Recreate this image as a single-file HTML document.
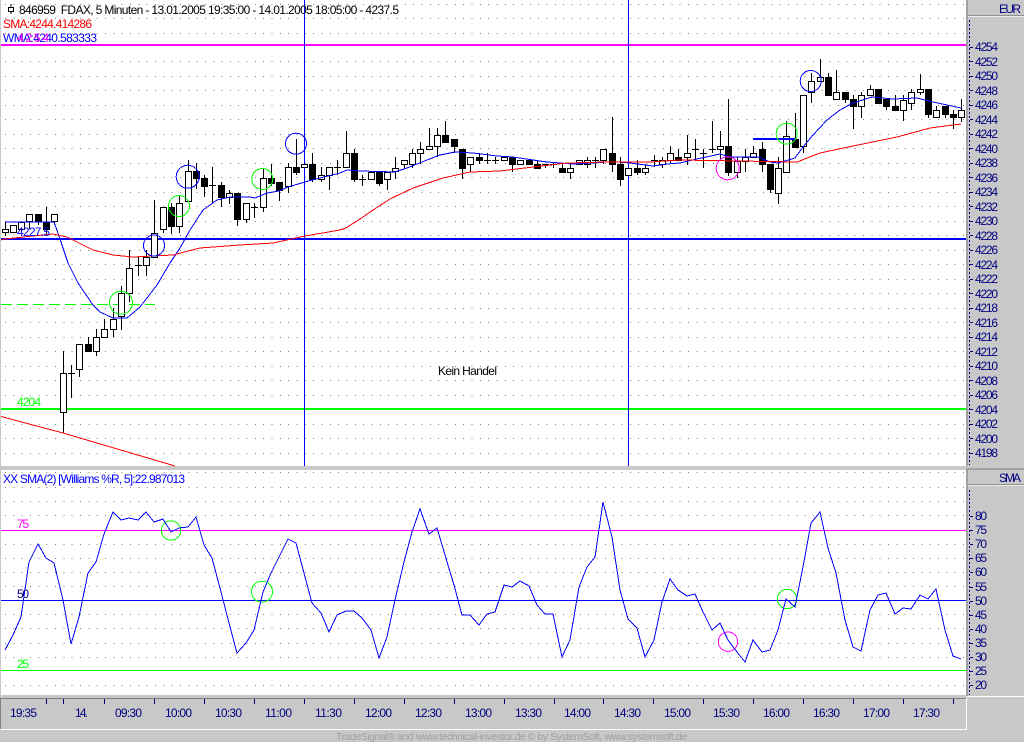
<!DOCTYPE html>
<html><head><meta charset="utf-8"><title>FDAX</title>
<style>
html,body{margin:0;padding:0;width:1024px;height:742px;overflow:hidden;background:#c8c8c8}
svg{display:block;position:absolute;left:0;top:0}
text{font-family:"Liberation Sans",sans-serif;font-size:12px}
</style></head><body>
<svg width="1024" height="742" viewBox="0 0 1024 742" xmlns="http://www.w3.org/2000/svg">
<rect width="1024" height="742" fill="#c8c8c8"/>
<rect x="1" y="0" width="965" height="466" fill="#fff"/>
<rect x="1" y="470" width="965" height="225" fill="#fff"/>
<rect x="966" y="0" width="2" height="466" fill="#a0a0a0"/>
<rect x="966" y="470" width="2" height="226" fill="#a0a0a0"/>
<rect x="968" y="15" width="56" height="1" fill="#909090"/><rect x="968" y="16" width="56" height="1" fill="#ececec"/>
<rect x="966" y="468" width="58" height="2" fill="#a0a0a0"/>
<rect x="968" y="484" width="56" height="1" fill="#909090"/><rect x="968" y="485" width="56" height="1" fill="#ececec"/>
<rect x="967" y="696" width="57" height="1" fill="#fff"/>
<rect x="0" y="698" width="966" height="1" fill="#808080"/>
<rect x="0" y="698" width="1" height="31" fill="#808080"/>
<rect x="966" y="698" width="1" height="32" fill="#fff"/>
<rect x="0" y="729" width="967" height="1" fill="#fff"/>

<g stroke="#808080" stroke-width="1" stroke-dasharray="1 7.33" shape-rendering="crispEdges">
<path fill="none" d="M5 4.5H965M5 18.5H965M5 33.5H965M5 61.5H965M5 76.5H965M5 90.5H965M5 105.5H965M5 119.5H965M5 134.5H965M5 148.5H965M5 163.5H965M5 177.5H965M5 192.5H965M5 206.5H965M5 221.5H965M5 235.5H965M5 250.5H965M5 264.5H965M5 279.5H965M5 293.5H965M5 308.5H965M5 322.5H965M5 337.5H965M5 351.5H965M5 366.5H965M5 380.5H965M5 395.5H965M5 409.5H965M5 424.5H965M5 438.5H965M5 453.5H965"/>
<path fill="none" d="M5 472.5H965M5 487.5H965M5 501.5H965M5 515.5H965M5 544.5H965M5 558.5H965M5 572.5H965M5 586.5H965M5 614.5H965M5 628.5H965M5 643.5H965M5 657.5H965M5 685.5H965"/>
</g>

<!-- level lines -->
<g shape-rendering="crispEdges">
<rect x="1" y="44" width="965" height="2" fill="#ff00ff"/>
<rect x="1" y="238" width="965" height="2" fill="#0000ff"/>
<rect x="1" y="408" width="965" height="2" fill="#00ff00"/>
<path d="M1 304.5H155" stroke="#00ff00" stroke-dasharray="11 5" fill="none"/>
<rect x="304" y="0" width="1" height="466" fill="#0000ff"/>
<rect x="628" y="0" width="1" height="466" fill="#0000ff"/>
<rect x="1" y="530" width="965" height="1" fill="#ff00ff"/>
<rect x="1" y="600" width="965" height="1" fill="#0000ff"/>
<rect x="1" y="670" width="965" height="1" fill="#00ff00"/>
</g>

<!-- wicks and doji -->
<path fill="none" stroke="#000" shape-rendering="crispEdges" d="M5.5 222V236M13.5 225V232M21.5 222V232M29.5 214V229M38.5 214V225M46.5 207V235M54.5 214V225M63.5 351V433M71.5 365V398M68 373.5h7M79.5 344V377M88.5 337V351M96.5 329V356M104.5 319V337M113.5 308V337M121.5 286V330M129.5 250V302M138.5 257V276M135 265.5h7M146.5 250V276M154.5 200V258M163.5 207V233M171.5 203V234M179.5 195V233M188.5 160V201M196.5 163V189M204.5 175V197M212.5 167V203M209 185.5h7M221.5 182V207M229.5 190V204M237.5 193V226M246.5 203V223M254.5 203V218M251 207.5h7M263.5 168V212M271.5 164V186M279.5 182V201M288.5 163V193M296.5 139V175M312.5 153V182M321.5 167V182M329.5 167V190M337.5 160V175M334 167.5h7M346.5 131V167M354.5 149V182M362.5 175V186M359 179.5h7M379.5 172V186M387.5 172V190M395.5 157V179M404.5 160V168M412.5 149V168M420.5 142V164M429.5 128V149M437.5 128V157M445.5 121V142M454.5 139V153M462.5 149V179M470.5 157V172M479.5 153V164M487.5 153V164M484 160.5h7M495.5 157V164M492 160.5h7M512.5 157V172M537.5 160V168M545.5 164V168M542 164.5h7M553.5 163V168M550 164.5h7M562.5 164V172M570.5 164V179M587.5 157V168M595.5 157V168M592 160.5h7M603.5 149V164M612.5 117V172M620.5 157V186M637.5 160V175M645.5 164V175M654.5 155V167M651 160.5h7M662.5 157V168M670.5 146V164M678.5 149V160M687.5 135V165M695.5 139V160M692 149.5h7M703.5 149V168M700 153.5h7M712.5 121V153M709 149.5h7M720.5 131V160M728.5 99V176M737.5 157V178M745.5 149V172M753.5 146V157M762.5 142V172M770.5 164V193M778.5 157V204M786.5 121V172M795.5 113V147M803.5 95V153M811.5 73V103M820.5 59V81M828.5 73V95M836.5 70V99M845.5 92V103M853.5 95V129M861.5 92V118M870.5 85V95M878.5 89V103M886.5 99V110M895.5 95V110M903.5 95V121M911.5 89V110M920.5 74V95M928.5 89V118M936.5 106V117M945.5 106V118M953.5 110V129M961.5 99V122"/>

<!-- white bodies -->
<path fill="#fff" stroke="#000" shape-rendering="crispEdges" d="M2.5 229.5h6v3h-6zM10.5 225.5h6v7h-6zM18.5 222.5h6v7h-6zM26.5 214.5h6v7h-6zM51.5 214.5h6v7h-6zM60.5 373.5h6v39h-6zM76.5 344.5h6v25h-6zM93.5 337.5h6v14h-6zM101.5 329.5h6v8h-6zM110.5 319.5h6v10h-6zM118.5 293.5h6v23h-6zM126.5 268.5h6v25h-6zM143.5 257.5h6v8h-6zM151.5 233.5h6v24h-6zM160.5 207.5h6v22h-6zM176.5 203.5h6v23h-6zM185.5 171.5h6v30h-6zM226.5 193.5h6v4h-6zM243.5 203.5h6v16h-6zM260.5 178.5h6v29h-6zM285.5 167.5h6v19h-6zM301.5 164.5h6v3h-6zM318.5 175.5h6v4h-6zM326.5 167.5h6v8h-6zM343.5 153.5h6v14h-6zM368.5 172.5h6v7h-6zM384.5 172.5h6v7h-6zM392.5 168.5h6v3h-6zM401.5 160.5h6v4h-6zM409.5 153.5h6v11h-6zM417.5 149.5h6v4h-6zM426.5 146.5h6v3h-6zM434.5 135.5h6v11h-6zM467.5 157.5h6v7h-6zM501.5 157.5h6v3h-6zM517.5 160.5h6v4h-6zM567.5 168.5h6v4h-6zM576.5 160.5h6v4h-6zM584.5 160.5h6v4h-6zM600.5 149.5h6v11h-6zM625.5 168.5h6v7h-6zM642.5 168.5h6v4h-6zM659.5 160.5h6v4h-6zM667.5 153.5h6v7h-6zM684.5 153.5h6v4h-6zM717.5 146.5h6v3h-6zM734.5 161.5h6v11h-6zM742.5 157.5h6v4h-6zM750.5 153.5h6v4h-6zM775.5 168.5h6v25h-6zM783.5 136.5h6v36h-6zM800.5 95.5h6v51h-6zM808.5 81.5h6v11h-6zM817.5 77.5h6v4h-6zM833.5 92.5h6v7h-6zM858.5 95.5h6v11h-6zM867.5 89.5h6v6h-6zM900.5 100.5h6v10h-6zM908.5 92.5h6v11h-6zM917.5 89.5h6v3h-6zM933.5 110.5h6v7h-6zM958.5 110.5h6v7h-6z"/>
<!-- black bodies -->
<path fill="#000" stroke="#000" shape-rendering="crispEdges" d="M35.5 214.5h6v7h-6zM43.5 222.5h6v7h-6zM85.5 344.5h6v7h-6zM168.5 207.5h6v19h-6zM193.5 171.5h6v7h-6zM201.5 178.5h6v8h-6zM218.5 185.5h6v12h-6zM234.5 193.5h6v26h-6zM268.5 178.5h6v5h-6zM276.5 182.5h6v8h-6zM293.5 167.5h6v5h-6zM309.5 164.5h6v15h-6zM351.5 153.5h6v26h-6zM376.5 172.5h6v11h-6zM442.5 135.5h6v7h-6zM451.5 139.5h6v7h-6zM459.5 149.5h6v19h-6zM476.5 157.5h6v3h-6zM509.5 157.5h6v7h-6zM526.5 160.5h6v4h-6zM534.5 164.5h6v4h-6zM559.5 168.5h6v4h-6zM609.5 153.5h6v11h-6zM617.5 164.5h6v15h-6zM634.5 168.5h6v4h-6zM675.5 157.5h6v3h-6zM725.5 146.5h6v26h-6zM759.5 149.5h6v15h-6zM767.5 164.5h6v25h-6zM792.5 139.5h6v8h-6zM825.5 77.5h6v18h-6zM842.5 92.5h6v7h-6zM850.5 99.5h6v7h-6zM875.5 89.5h6v14h-6zM883.5 99.5h6v7h-6zM892.5 106.5h6v4h-6zM925.5 89.5h6v25h-6zM942.5 106.5h6v8h-6zM950.5 114.5h6v3h-6z"/>

<!-- moving averages -->
<polyline fill="none" stroke="#0000ff" shape-rendering="crispEdges" points="5,222 54,222 59,236 68,263 78,283 93,305 100,312 113,318 127,318 140,307 157,285 170,263 180,248 190,230 203,210 217,200 230,197 250,197 255,198 267,193 279,191 288,187 305,182 320,178 340,173 347,170 360,171 395,172 407,168 427,160 440,155 455,152 473,153 497,156 513,157 533,160 547,162 573,164 593,163 607,162 617,162 630,163 653,166 667,164 680,163 697,159 720,154 730,157 758,157 770,162 778,163 795,158 803,147 813,135 827,120 840,110 853,103 872,97 893,99 917,98 933,102 961,108"/>
<polyline fill="none" stroke="#ff0000" shape-rendering="crispEdges" points="1,240 5,239 33,236 53,234 67,237 93,250 113,255 133,257 173,255 200,248 240,245 273,243 305,236 340,230 346,228 360,219 373,210 390,199 413,188 443,178 470,172 500,171 533,167 567,163 607,162 650,162 680,160 797,162 820,153 853,146 897,137 930,128 961,124"/>
<path d="M1 416.5L63 433L175 466" fill="none" stroke="#ff0000" shape-rendering="crispEdges"/>
<rect x="753" y="138" width="42" height="2" fill="#0000ff"/>

<!-- circles -->
<g fill="none" shape-rendering="crispEdges">
<circle cx="187.7" cy="176.7" r="11.5" stroke="#0000ff"/>
<circle cx="296" cy="143.7" r="10.5" stroke="#0000ff"/>
<circle cx="154" cy="245.5" r="10.5" stroke="#0000ff"/>
<circle cx="810.7" cy="81" r="10.5" stroke="#0000ff"/>
<circle cx="179" cy="206" r="10.5" stroke="#00ff00"/>
<circle cx="262.3" cy="179" r="10.5" stroke="#00ff00"/>
<circle cx="121" cy="302.7" r="11.5" stroke="#00ff00"/>
<circle cx="786.7" cy="133.7" r="10.5" stroke="#00ff00"/>
<circle cx="727.7" cy="168.3" r="11.5" stroke="#ff00ff"/>
<circle cx="171" cy="530.5" r="9.7" stroke="#00ff00"/>
<circle cx="262" cy="591.7" r="10.5" stroke="#00ff00"/>
<circle cx="787" cy="599" r="9.7" stroke="#00ff00"/>
<circle cx="728" cy="641.7" r="9.7" stroke="#ff00ff"/>
</g>

<!-- oscillator -->
<polyline fill="none" stroke="#0000ff" shape-rendering="crispEdges" points="5,650 13,635 21,617 29,562 38,544 46,558 54,563 63,600 71,644 79,617 88,573 96,562 104,534 113,512 121,520 129,518 138,520 146,512 154,522 163,519 171,532 179,528 188,527 196,517 204,545 212,558 221,592 229,623 237,653 246,643 254,630 263,592 271,573 279,557 288,539 296,543 304,573 312,603 321,613 329,632 337,615 346,611 354,611 362,618 371,630 379,658 387,637 395,600 404,562 412,532 420,509 429,534 437,528 445,555 454,585 462,615 470,615 479,625 487,614 495,612 504,585 512,587 520,581 529,586 537,605 545,614 553,614 562,657 570,640 579,587 587,567 595,557 603,502 612,537 620,590 628,619 637,628 645,657 654,640 662,602 670,579 678,590 687,596 695,594 703,612 712,630 720,623 728,640 737,652 745,662 753,640 762,652 770,650 778,630 786,599 795,607 803,567 811,523 820,512 828,548 836,573 845,620 853,647 861,651 870,610 878,595 886,593 895,614 903,608 911,609 920,595 928,599 936,589 945,630 953,656 961,659"/>

<!-- icon -->
<rect x="8.5" y="7.5" width="5" height="4" fill="#fff" stroke="#000" shape-rendering="crispEdges"/>
<path d="M11 4V7M11 12V14" stroke="#000" stroke-width="1" shape-rendering="crispEdges"/>

<!-- header text -->
<text x="19" y="14" textLength="380" fill="#000" xml:space="preserve">846959  FDAX, 5 Minuten - 13.01.2005 19:35:00 - 14.01.2005 18:05:00 - 4237.5</text>
<text x="3" y="28" textLength="89" fill="#ff0000">SMA:4244.414286</text>
<text x="3" y="42" textLength="94" fill="#0000ff">WMA:4240.583333</text>
<text x="17" y="42" textLength="32" fill="#ff00ff">4254</text>
<text x="17" y="236" textLength="33" fill="#0000ff">4227.5</text>
<text x="17" y="406" textLength="24" fill="#00ff00">4204</text>
<text x="438" y="375" textLength="59" fill="#000">Kein Handel</text>
<text x="3" y="483" textLength="182" fill="#0000ff">XX SMA(2) [Williams %R, 5]:22.987013</text>
<text x="17" y="528" textLength="12" fill="#ff00ff">75</text>
<text x="17" y="598" textLength="12" fill="#000080">50</text>
<text x="17" y="668" textLength="12" fill="#00ff00">25</text>

<!-- right axis -->
<path d="M969.5 20V465M969.5 490V695" stroke="#000080" stroke-dasharray="2 2" fill="none" shape-rendering="crispEdges"/>
<path d="M970 47.5h3M970 61.5h3M970 76.5h3M970 90.5h3M970 105.5h3M970 119.5h3M970 134.5h3M970 148.5h3M970 163.5h3M970 177.5h3M970 192.5h3M970 206.5h3M970 221.5h3M970 235.5h3M970 250.5h3M970 264.5h3M970 279.5h3M970 293.5h3M970 308.5h3M970 322.5h3M970 337.5h3M970 351.5h3M970 366.5h3M970 380.5h3M970 395.5h3M970 409.5h3M970 424.5h3M970 438.5h3M970 453.5h3M970 516.5h3M970 530.5h3M970 544.5h3M970 558.5h3M970 572.5h3M970 587.5h3M970 601.5h3M970 615.5h3M970 629.5h3M970 643.5h3M970 657.5h3M970 671.5h3M970 685.5h3" stroke="#000080" fill="none" shape-rendering="crispEdges"/>
<g fill="#000080">
<text x="999" y="13" textLength="22">EUR</text>
<text x="999" y="482" textLength="22">SMA</text>
<text x="975" y="51" textLength="23">4254</text><text x="975" y="66" textLength="23">4252</text><text x="975" y="80" textLength="23">4250</text><text x="975" y="95" textLength="23">4248</text><text x="975" y="109" textLength="23">4246</text><text x="975" y="124" textLength="23">4244</text><text x="975" y="138" textLength="23">4242</text><text x="975" y="153" textLength="23">4240</text><text x="975" y="167" textLength="23">4238</text><text x="975" y="182" textLength="23">4236</text><text x="975" y="196" textLength="23">4234</text><text x="975" y="211" textLength="23">4232</text><text x="975" y="225" textLength="23">4230</text><text x="975" y="240" textLength="23">4228</text><text x="975" y="254" textLength="23">4226</text><text x="975" y="269" textLength="23">4224</text><text x="975" y="283" textLength="23">4222</text><text x="975" y="298" textLength="23">4220</text><text x="975" y="312" textLength="23">4218</text><text x="975" y="327" textLength="23">4216</text><text x="975" y="341" textLength="23">4214</text><text x="975" y="356" textLength="23">4212</text><text x="975" y="370" textLength="23">4210</text><text x="975" y="385" textLength="23">4208</text><text x="975" y="399" textLength="23">4206</text><text x="975" y="414" textLength="23">4204</text><text x="975" y="428" textLength="23">4202</text><text x="975" y="443" textLength="23">4200</text><text x="975" y="457" textLength="23">4198</text>
<text x="975" y="520" textLength="12">80</text><text x="975" y="534" textLength="12">75</text><text x="975" y="548" textLength="12">70</text><text x="975" y="562" textLength="12">65</text><text x="975" y="576" textLength="12">60</text><text x="975" y="591" textLength="12">55</text><text x="975" y="605" textLength="12">50</text><text x="975" y="619" textLength="12">45</text><text x="975" y="633" textLength="12">40</text><text x="975" y="647" textLength="12">35</text><text x="975" y="661" textLength="12">30</text><text x="975" y="675" textLength="12">25</text><text x="975" y="689" textLength="12">20</text>
</g>

<!-- time axis -->
<path d="M46.5 699v5M63.5 699v5M104.5 699v5M154.5 699v5M204.5 699v5M254.5 699v5M304.5 699v5M354.5 699v5M404.5 699v5M454.5 699v5M504.5 699v5M554.5 699v5M603.5 699v5M653.5 699v5M703.5 699v5M753.5 699v5M803.5 699v5M853.5 699v5M903.5 699v5M953.5 699v5" stroke="#000080" fill="none" shape-rendering="crispEdges"/>
<g fill="#000080">
<text x="10" y="717" textLength="27">19:35</text><text x="75" y="717" textLength="13">14.</text><text x="115" y="717" textLength="27">09:30</text><text x="165" y="717" textLength="27">10:00</text><text x="215" y="717" textLength="27">10:30</text><text x="265" y="717" textLength="27">11:00</text><text x="315" y="717" textLength="27">11:30</text><text x="365" y="717" textLength="27">12:00</text><text x="415" y="717" textLength="27">12:30</text><text x="465" y="717" textLength="27">13:00</text><text x="515" y="717" textLength="27">13:30</text><text x="564" y="717" textLength="27">14:00</text><text x="614" y="717" textLength="27">14:30</text><text x="664" y="717" textLength="27">15:00</text><text x="713" y="717" textLength="27">15:30</text><text x="763" y="717" textLength="27">16:00</text><text x="813" y="717" textLength="27">16:30</text><text x="863" y="717" textLength="27">17:00</text><text x="913" y="717" textLength="27">17:30</text>
</g>
<text x="336" y="740" textLength="351" fill="#a0a0a0" style="font-size:10.5px">TradeSignal® and www.technical-investor.de © by SystemSoft, www.systemsoft.de</text>
</svg>
</body></html>
